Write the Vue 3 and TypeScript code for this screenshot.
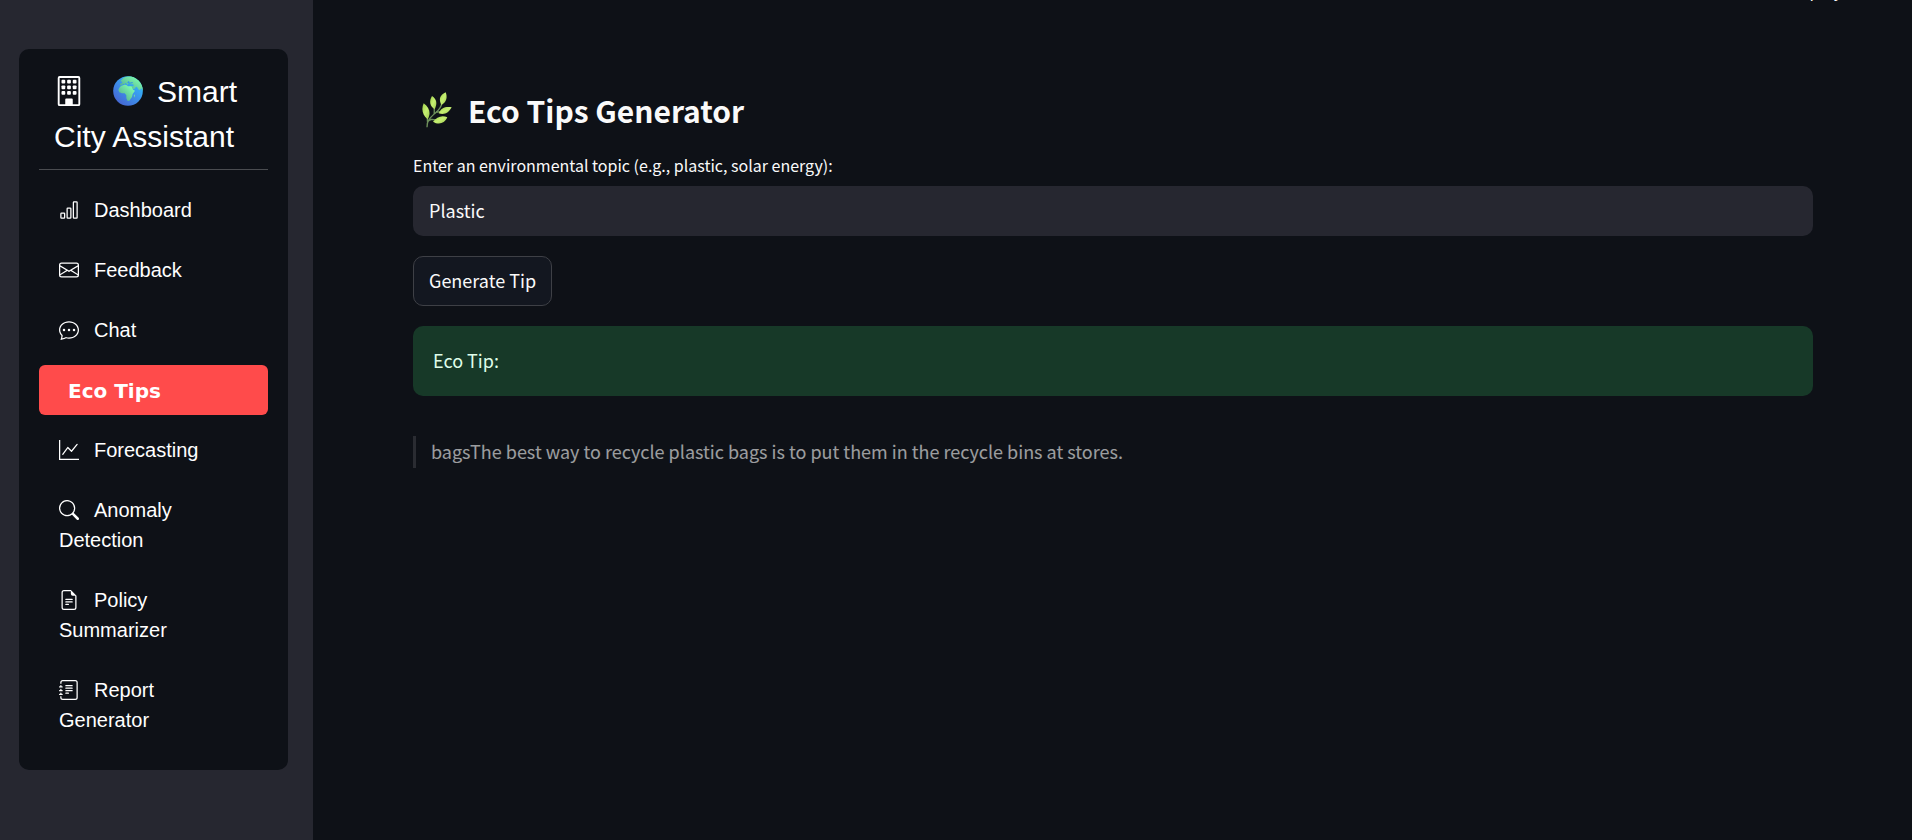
<script setup lang="ts">
import { ref } from 'vue'

interface NavItem {
  label: string
  paths: string[]
}

const topic = ref('Plastic')
const tip = ref('bagsThe best way to recycle plastic bags is to put them in the recycle bins at stores.')
const active = ref('Eco Tips')

const items: NavItem[] = [
  {
    label: 'Dashboard',
    paths: [
      'M4 11H2v3h2zm5-4H7v7h2zm5-5v12h-2V2zm-2-1a1 1 0 0 0-1 1v12a1 1 0 0 0 1 1h2a1 1 0 0 0 1-1V2a1 1 0 0 0-1-1zM6 7a1 1 0 0 1 1-1h2a1 1 0 0 1 1 1v7a1 1 0 0 1-1 1H7a1 1 0 0 1-1-1zm-5 4a1 1 0 0 1 1-1h2a1 1 0 0 1 1 1v3a1 1 0 0 1-1 1H2a1 1 0 0 1-1-1z',
    ],
  },
  {
    label: 'Feedback',
    paths: [
      'M0 4a2 2 0 0 1 2-2h12a2 2 0 0 1 2 2v8a2 2 0 0 1-2 2H2a2 2 0 0 1-2-2zm2-1a1 1 0 0 0-1 1v.217l7 4.2 7-4.2V4a1 1 0 0 0-1-1zm13 2.383-4.708 2.825L15 11.105zm-.034 6.876-5.64-3.471L8 9.583l-1.326-.795-5.64 3.47A1 1 0 0 0 2 13h12a1 1 0 0 0 .966-.741M1 11.105l4.708-2.897L1 5.383z',
    ],
  },
  {
    label: 'Chat',
    paths: [
      'M5 8a1 1 0 1 1-2 0 1 1 0 0 1 2 0m4 0a1 1 0 1 1-2 0 1 1 0 0 1 2 0m3 1a1 1 0 1 0 0-2 1 1 0 0 0 0 2',
      'm2.165 15.803.02-.004c1.83-.363 2.948-.842 3.468-1.105A9 9 0 0 0 8 15c4.418 0 8-3.134 8-7s-3.582-7-8-7-8 3.134-8 7c0 1.76.743 3.37 1.97 4.6a10.4 10.4 0 0 1-.524 2.318l-.003.011a11 11 0 0 1-.244.637c-.079.186.074.394.273.362a22 22 0 0 0 .693-.125m.8-3.108a1 1 0 0 0-.287-.801C1.618 10.83 1 9.468 1 8c0-3.192 3.004-6 7-6s7 2.808 7 6-3.004 6-7 6a8 8 0 0 1-2.088-.272 1 1 0 0 0-.711.074c-.387.196-1.24.57-2.634.893a11 11 0 0 0 .398-2',
    ],
  },
  { label: 'Eco Tips', paths: [] },
  {
    label: 'Forecasting',
    paths: [
      'M0 0h1v15h15v1H0zm14.817 3.113a.5.5 0 0 1 .07.704l-4.5 5.5a.5.5 0 0 1-.74.037L7.06 6.767l-3.656 5.027a.5.5 0 0 1-.808-.588l4-5.5a.5.5 0 0 1 .758-.06l2.609 2.61 4.15-5.073a.5.5 0 0 1 .704-.07',
    ],
  },
  {
    label: 'Anomaly Detection',
    paths: [
      'M11.742 10.344a6.5 6.5 0 1 0-1.397 1.398h-.001q.044.06.098.115l3.85 3.85a1 1 0 0 0 1.415-1.414l-3.85-3.85a1 1 0 0 0-.115-.1zM12 6.5a5.5 5.5 0 1 1-11 0 5.5 5.5 0 0 1 11 0',
    ],
  },
  {
    label: 'Policy Summarizer',
    paths: [
      'M5.5 7a.5.5 0 0 0 0 1h5a.5.5 0 0 0 0-1zM5 9.5a.5.5 0 0 1 .5-.5h5a.5.5 0 0 1 0 1h-5a.5.5 0 0 1-.5-.5m0 2a.5.5 0 0 1 .5-.5h2a.5.5 0 0 1 0 1h-2a.5.5 0 0 1-.5-.5',
      'M9.5 0H4a2 2 0 0 0-2 2v12a2 2 0 0 0 2 2h8a2 2 0 0 0 2-2V4.5zm0 1v2A1.5 1.5 0 0 0 11 4.5h2V14a1 1 0 0 1-1 1H4a1 1 0 0 1-1-1V2a1 1 0 0 1 1-1z',
    ],
  },
  {
    label: 'Report Generator',
    paths: [
      'M5 10.5a.5.5 0 0 1 .5-.5h2a.5.5 0 0 1 0 1h-2a.5.5 0 0 1-.5-.5m0-2a.5.5 0 0 1 .5-.5h5a.5.5 0 0 1 0 1h-5a.5.5 0 0 1-.5-.5m0-2a.5.5 0 0 1 .5-.5h5a.5.5 0 0 1 0 1h-5a.5.5 0 0 1-.5-.5m0-2a.5.5 0 0 1 .5-.5h5a.5.5 0 0 1 0 1h-5a.5.5 0 0 1-.5-.5',
      'M3 0h10a2 2 0 0 1 2 2v12a2 2 0 0 1-2 2H3a2 2 0 0 1-2-2v-1h1v1a1 1 0 0 0 1 1h10a1 1 0 0 0 1-1V2a1 1 0 0 0-1-1H3a1 1 0 0 0-1 1v1H1V2a2 2 0 0 1 2-2',
      'M1 5v-.5a.5.5 0 0 1 1 0V5h.5a.5.5 0 0 1 0 1h-2a.5.5 0 0 1 0-1zm0 3v-.5a.5.5 0 0 1 1 0V8h.5a.5.5 0 0 1 0 1h-2a.5.5 0 0 1 0-1zm0 3v-.5a.5.5 0 0 1 1 0v.5h.5a.5.5 0 0 1 0 1h-2a.5.5 0 0 1 0-1z',
    ],
  },
]
</script>

<template>
  <div class="app">
    <aside class="sidebar">
      <div class="card">
        <div class="brand">
          <svg class="brand-building" viewBox="0 0 16 16" fill="currentColor" aria-hidden="true">
            <path d="M2 1a1 1 0 0 1 1-1h10a1 1 0 0 1 1 1v14a1 1 0 0 1-1 1H3a1 1 0 0 1-1-1zm11 0H3v14h3v-2.5a.5.5 0 0 1 .5-.5h3a.5.5 0 0 1 .5.5V15h3z" />
            <template v-for="y in [2, 5, 8]" :key="y">
              <rect v-for="x in [4, 7, 10]" :key="x" :x="x" :y="y" width="2" height="2" rx="0.5" />
            </template>
          </svg>
          <svg class="brand-globe" viewBox="0 0 90 90" aria-hidden="true">
            <defs>
              <linearGradient id="sea" x1="0.2" y1="1" x2="0.9" y2="0.2">
                <stop offset="0" stop-color="#4662cf" />
                <stop offset="0.5" stop-color="#3d8ce8" />
                <stop offset="1" stop-color="#31bcfb" />
              </linearGradient>
              <linearGradient id="land" x1="0" y1="1" x2="1" y2="0">
                <stop offset="0.1" stop-color="#52a98e" />
                <stop offset="0.8" stop-color="#7cf8ad" />
              </linearGradient>
              <clipPath id="disc"><circle cx="45" cy="45" r="44.5" /></clipPath>
            </defs>
            <g clip-path="url(#disc)">
              <rect width="90" height="90" fill="url(#sea)" />
              <g fill="url(#land)">
                <path d="M22 16l8-9 8-5 14-2h20l18 20v25l-5-8-4 5-4-1-5-8-3-1-4 6-7 3-6-8 2-3 8 1-1-6-10 0-4-3-4 5-4-6-3 0 2 7-5-5-6 3-5 3-1-6 7-2-3-5z" />
                <path d="M24 30l10-4 6 1 5 4 10 0 5 10 6 3-7 10-2 9-8 11-5 1-4-8 0-9-5-6-8 0-8-3-3-7 3-7z" />
                <path d="M62 59l4-4-1 7-3 4z" />
              </g>
              <path fill="#3598e5" d="M42 19l6-4 2 5 8-2 2 3-10 2-4-1z" />
            </g>
          </svg>
          <span>Smart City Assistant</span>
        </div>
        <nav class="nav" aria-label="Pages">
          <a
            v-for="item in items"
            :key="item.label"
            href="#"
            class="nav-link"
            :class="{ active: item.label === active }"
            :aria-current="item.label === active ? 'page' : undefined"
            @click.prevent="active = item.label"
          >
            <svg v-if="item.paths.length" class="nav-icon" viewBox="0 0 16 16" fill="currentColor" aria-hidden="true">
              <path v-for="d in item.paths" :key="d" :d="d" />
            </svg>
            <span>{{ item.label }}</span>
          </a>
        </nav>
      </div>
    </aside>

    <main class="main">
      <button class="deploy" type="button">Deploy</button>
      <h1 class="title">
        <svg class="leaf" viewBox="0 0 90 108" aria-hidden="true">
          <defs>
            <linearGradient id="leafFill" x1="0" y1="0" x2="1" y2="1">
              <stop offset="0" stop-color="#9fcf4a" />
              <stop offset="0.5" stop-color="#c6ef72" />
              <stop offset="1" stop-color="#9cc94c" />
            </linearGradient>
          </defs>
          <path d="M15 106C14 84 28 74 41 62C52 53 58 44 60 32M17 92C15 83 17 80 16 74M16 90C24 80 32 82 42 84M36 66C38 60 36 54 37 46M42 61L60 58" fill="none" stroke="#6d8f5b" stroke-width="4" />
          <g fill="url(#leafFill)">
            <path d="M5 34C-2 49 0 70 17 82C27 65 24 48 5 34z" />
            <path d="M30 12C20 28 24 43 38 52C46 35 45 22 30 12z" />
            <path d="M71 1C52 10 50 23 58 39C74 30 77 16 71 1z" />
            <path d="M89 46C70 43 57 48 50 64C68 70 80 62 89 46z" />
            <path d="M76 76C60 68 44 75 33 89C49 99 67 96 76 76z" />
          </g>
        </svg>
        <span>Eco Tips Generator</span>
      </h1>
      <label class="label" for="topic">Enter an environmental topic (e.g., plastic, solar energy):</label>
      <input id="topic" v-model="topic" class="input" type="text" autocomplete="off" />
      <button class="generate" type="button">Generate Tip</button>
      <div class="alert" role="status">Eco Tip:</div>
      <blockquote class="quote">{{ tip }}</blockquote>
    </main>
  </div>
</template>

<style>
body {
  background: #0e1117;
}
</style>

<style scoped>
.app {
  display: flex;
  min-height: 100vh;
  color: #fafafa;
  background: #0e1117;
  font-family: "Noto Sans CJK SC", "Noto Sans", sans-serif;
  font-size: 18px;
  line-height: 30px;
}

.app *,
.app *::before {
  box-sizing: border-box;
}

.sidebar {
  flex: 0 0 313px;
  padding: 49px 25px 49px 19px;
  background: #262730;
}

.card {
  padding: 20px;
  border-radius: 10px;
  background: #0e1117;
  color: #fff;
  font-family: "Liberation Sans", Arial, sans-serif;
}

.brand {
  padding: 0 15px 10px;
  border-bottom: 1px solid #4a4c50;
  font-size: 30px;
  line-height: 45px;
}

.brand-building,
.brand-globe {
  width: 30px;
  height: 30px;
  vertical-align: -4px;
}

.brand-building {
  margin-right: 29px;
}

.brand-globe {
  margin-right: 14px;
}

.nav {
  display: flex;
  flex-direction: column;
  gap: 10px;
  padding: 15px 0 5px;
}

.nav-link {
  display: block;
  padding: 10px 20px;
  border-radius: 6px;
  color: #fff;
  font-size: 20px;
  text-decoration: none;
}

.nav-link.active {
  padding: 11px 20px 9px 29px;
  background: #ff4b4b;
  font-family: "Arial Black", "DejaVu Sans", sans-serif;
  font-weight: 900;
}

.nav-icon {
  width: 20px;
  height: 20px;
  margin-right: 15px;
  vertical-align: -3px;
}

.main {
  position: relative;
  flex: 1;
  display: flex;
  flex-direction: column;
  align-items: stretch;
  min-width: 0;
  padding: 89px 99px 40px 100px;
  overflow: hidden;
}

.deploy {
  position: absolute;
  top: -22px;
  right: 65px;
  padding: 0 5px;
  border: 0;
  background: none;
  color: inherit;
  font-family: inherit;
  font-size: 16px;
  line-height: 24px;
}

.title {
  display: flex;
  align-items: center;
  gap: 16px;
  margin: 0 0 20px;
  padding-left: 9px;
  font-size: 30px;
  font-weight: 600;
  line-height: 42px;
}

.leaf {
  width: 30px;
  height: 36px;
}

.label {
  margin-bottom: 7px;
  font-size: 16px;
  line-height: 28px;
}

.input {
  width: 100%;
  height: 50px;
  margin: 0 0 20px;
  padding: 0 16px 2px;
  border: 0;
  border-radius: 10px;
  background: #262730;
  color: inherit;
  font: inherit;
}

.generate {
  align-self: flex-start;
  height: 50px;
  margin: 0 0 20px;
  padding: 0 15px 2px;
  border: 1px solid #3e4046;
  border-radius: 10px;
  background: #131720;
  color: inherit;
  font: inherit;
}

.alert {
  padding: 19px 20px 21px;
  border-radius: 10px;
  background: #173928;
  color: #dffde9;
}

.quote {
  margin: 40px 0 0;
  padding: 0 0 2px 15px;
  border-left: 3px solid rgba(250, 250, 250, 0.2);
  opacity: 0.6;
}
</style>
